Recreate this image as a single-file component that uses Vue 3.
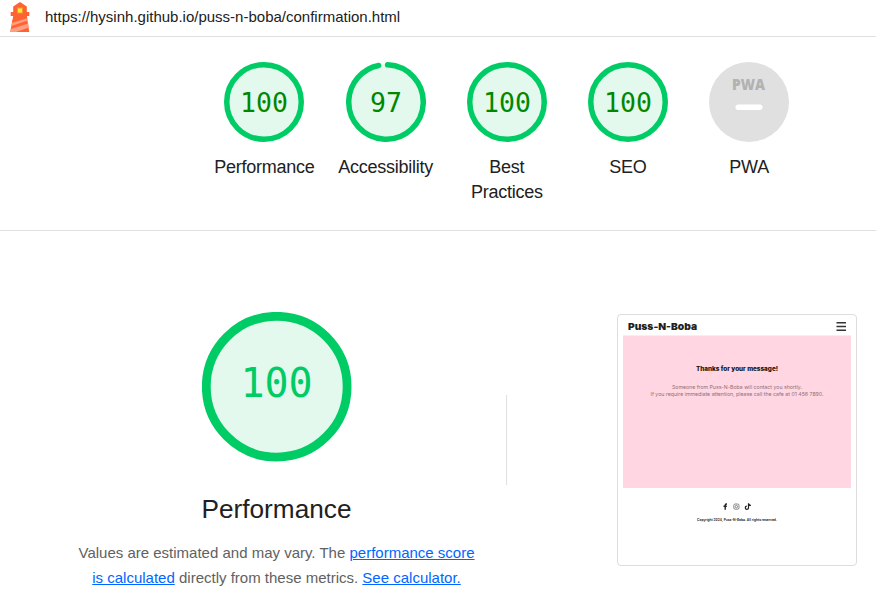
<script setup>
const scores = [
  { label: 'Performance', value: 100 },
  { label: 'Accessibility', value: 97 },
  { label: 'Best Practices', value: 100 },
  { label: 'SEO', value: 100 },
  { label: 'PWA', value: null },
]
const circumference = 2 * Math.PI * 37.25
const arc = (v) => (v === 100 ? 'none' : `${(v / 100) * circumference - 2.4} ${circumference}`)
</script>

<template>
  <div class="report">
    <header class="topbar">
      <svg class="logo" width="22" height="32" viewBox="0 0 22 32">
        <path d="M11 1 17.800 5.500V11h2.500v4h-2.500l2.500 16H1.200L4.200 15H1.700v-4h2.500V5.500z" fill="#ff6333" />
        <path d="M3.300 20.500 17.900 15.500l.6 4L2.500 25zM1.800 28 19.200 22.500l.5 4L7 31H1.200z" fill="#ff9e80" />
        <path d="M3.500 19 17.900 14.500l.3 2.700L3 22z" fill="#ff6333" />
        <rect x="8.500" y="7" width="5" height="5" fill="#ffeb3b" stroke="#ee9a2b" stroke-width="1" />
      </svg>
      <span class="url">https://hysinh.github.io/puss-n-boba/confirmation.html</span>
    </header>

    <section class="scores">
      <div v-for="s in scores" :key="s.label" class="score">
        <svg v-if="s.value !== null" class="gauge" viewBox="0 0 80 80">
          <circle cx="40" cy="40" r="38" fill="#e4f9ee" />
          <circle cx="40" cy="40" r="37.250" fill="none" stroke="#00cc66" stroke-width="5.500" stroke-linecap="round"
            :stroke-dasharray="arc(s.value)" :transform="s.value === 100 ? '' : 'rotate(-87.500 40 40)'" />
          <text class="digits" x="40" y="49.500" text-anchor="middle">{{ s.value }}</text>
        </svg>
        <svg v-else class="gauge" viewBox="0 0 80 80">
          <circle cx="40" cy="40" r="40" fill="#e0e0e0" />
          <text class="pwa" x="23" y="28" textLength="33" lengthAdjust="spacingAndGlyphs">PWA</text>
          <rect x="26.500" y="42.500" width="27" height="5.500" rx="2.700" fill="#fff" />
        </svg>
        <span class="label">{{ s.label }}</span>
      </div>
    </section>

    <section class="detail">
      <div class="summary">
        <svg class="big" viewBox="0 0 150 150">
          <circle cx="74.700" cy="74.700" r="70.400" fill="#e4f9ee" stroke="#00cc66" stroke-width="8.800" />
          <text class="big-digits" x="74.500" y="85" text-anchor="middle">100</text>
        </svg>
        <h1>Performance</h1>
        <p>
          <span class="line">Values are estimated and may vary. The <a>performance score</a></span>
          <span class="line"><a>is calculated</a> directly from these metrics. <a>See calculator.</a></span>
        </p>
      </div>
      <div class="divider"></div>
      <div class="preview">
        <svg width="228" height="240" viewBox="0 0 228 240">
          <text class="brand" x="5" y="10.300" textLength="69" lengthAdjust="spacingAndGlyphs">Puss-N-Boba</text>
          <path d="M213.500 2.800h9.500M213.500 6.500h9.500M213.500 10.200h9.500" stroke="#333" stroke-width="1.500" />
          <rect y="15.500" width="228" height="152.500" fill="#ffd6e1" />
          <text class="thanks" x="73" y="51" textLength="82" lengthAdjust="spacingAndGlyphs">Thanks for your message!</text>
          <text class="copy" x="49" y="68.500" textLength="130" lengthAdjust="spacingAndGlyphs">Someone from Puss-N-Boba will contact you shortly.</text>
          <text class="copy" x="27.500" y="76" textLength="173" lengthAdjust="spacingAndGlyphs">If you require immediate attention, please call the cafe at 01 456 7890.</text>
          <path d="M104 184h-.6q-1.200 0-1.200 1.200v4.500M100.500 186.300h3.300" fill="none" stroke="#222" stroke-width="1.400" />
          <g fill="none" stroke="#777" stroke-width=".9">
            <rect x="110.800" y="184" width="5.200" height="5.200" rx="1.400" />
            <circle cx="113.400" cy="186.600" r="1.200" />
          </g>
          <path d="M125.500 183.300v4.500a1.600 1.600 0 1 1-1.700-1.600M125.500 183.500q.4 1.800 2.400 2" fill="none" stroke="#222" stroke-width="1.200" />
          <text class="legal" x="74" y="201" textLength="80" lengthAdjust="spacingAndGlyphs">Copyright 2024, Puss-N-Boba. All rights reserved.</text>
        </svg>
      </div>
    </section>
  </div>
</template>

<style>
body { background: #fff; overflow: hidden; }
</style>

<style scoped>
.report { box-sizing: border-box; width: 876px; height: 599px; overflow: hidden; font-family: "Liberation Sans", Arial, sans-serif; color: #212121; }
.topbar { box-sizing: border-box; height: 37px; display: flex; border-bottom: 1px solid #e0e0e0; padding: 1px 0 0 9px; }
.logo { flex: none; }
.url { margin-left: 14px; font-size: 15px; line-height: 31px; white-space: nowrap; }
.scores { box-sizing: border-box; height: 194px; display: flex; padding: 25px 0 0 203.800px; border-bottom: 1px solid #e0e0e0; }
.score { width: 121.200px; display: flex; flex-direction: column; align-items: center; }
.gauge { width: 80px; height: 80px; }
.digits { font: 26.500px "DejaVu Sans Mono", monospace; fill: #080; }
.pwa { font: 900 16.500px "Open Sans", sans-serif; fill: #b2b2b2; }
.label { margin-top: 13px; width: 100px; text-align: center; font-size: 18px; line-height: 25px; letter-spacing: -.25px; display: flex; justify-content: center; }
.detail { display: flex; height: 368px; }
.summary { width: 506px; box-sizing: border-box; padding: 81px 0 0 47px; display: flex; flex-direction: column; align-items: center; }
.big { width: 150px; height: 150px; }
.big-digits { font: 40px "DejaVu Sans Mono", monospace; fill: #0c6; }
h1 { margin: 31px 0 0; font-size: 26.200px; line-height: 32px; font-weight: 400; }
p { margin: 15px 0 0; font-size: 15px; line-height: 25px; color: #616161; text-align: center; }
.line { display: block; white-space: nowrap; }
a { color: #06f; text-decoration: underline; }
.divider { width: 1px; height: 90px; margin-top: 164px; background: #e0e0e0; }
.preview { box-sizing: border-box; width: 240px; height: 252px; margin: 83px 0 0 110px; padding: 5px; border: 1px solid #ddd; border-radius: 4px; }
.preview svg { display: block; }
.brand { font: 900 9.500px Inter, sans-serif; fill: #222; }
.thanks { font: 800 5.600px Inter, sans-serif; fill: #111; }
.copy { font: 5px Inter, sans-serif; fill: #8d7079; }
.legal { font: 700 3.500px Inter, sans-serif; fill: #333; }
</style>
